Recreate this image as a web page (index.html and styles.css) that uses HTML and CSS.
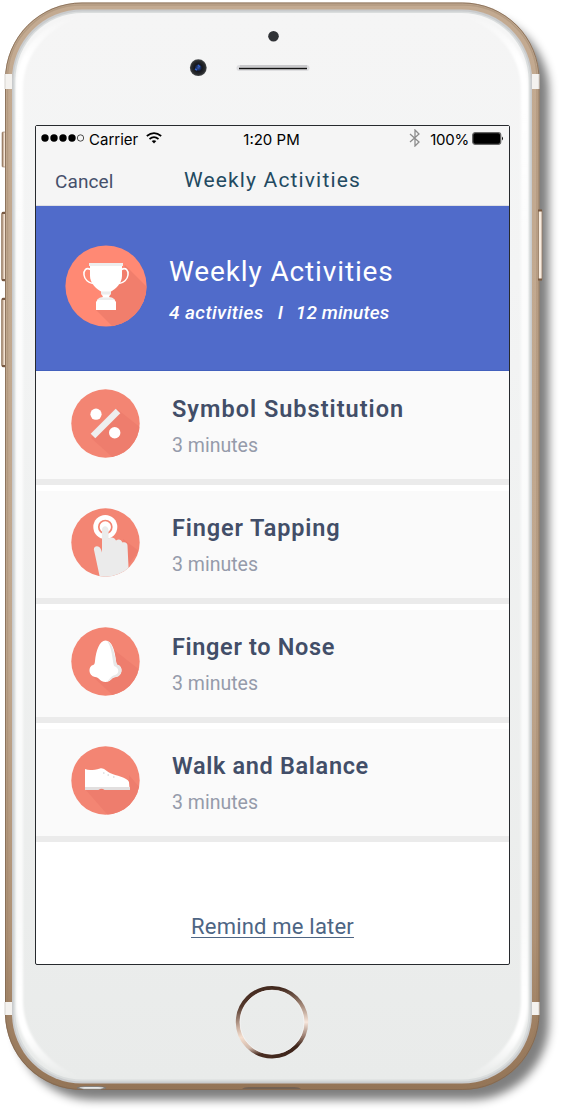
FILE: index.html
```html
<!DOCTYPE html>
<html lang="en">
<head>
<meta charset="utf-8">
<title>Weekly Activities</title>
<link rel="stylesheet" href="styles.css">
</head>
<body>
<main class="device">
  <svg class="hardware" viewBox="0 0 564 1115" aria-hidden="true">
    <defs>
      <linearGradient id="gold" x2="0" y2="1"><stop stop-color="#c3aa91"/><stop offset=".6" stop-color="#c0a78e"/><stop offset=".86" stop-color="#ae9175"/><stop offset="1" stop-color="#947456"/></linearGradient>
      <linearGradient id="face" x2="0" y2="1"><stop stop-color="#f5f5f5"/><stop offset=".25" stop-color="#f3f4f4"/><stop offset="1" stop-color="#e9ebea"/></linearGradient>
      <linearGradient id="shine" gradientUnits="userSpaceOnUse" x1="0" y1="15" x2="0" y2="1078"><stop stop-color="#fff" stop-opacity="0"/><stop offset=".04" stop-color="#fff"/><stop offset=".09" stop-color="#fff"/><stop offset=".2" stop-color="#fff" stop-opacity=".75"/><stop offset=".85" stop-color="#fff" stop-opacity=".75"/><stop offset=".92" stop-color="#fff"/><stop offset=".96" stop-color="#fff"/><stop offset="1" stop-color="#fff" stop-opacity="0"/></linearGradient>
      <linearGradient id="ring" x1=".25" y1="0" x2=".35" y2="1"><stop stop-color="#41281d"/><stop offset=".25" stop-color="#54382c"/><stop offset=".55" stop-color="#cbb0a0"/><stop offset=".7" stop-color="#f5dfcf"/><stop offset=".88" stop-color="#d0b8aa"/><stop offset="1" stop-color="#472b20"/></linearGradient>
      <linearGradient id="ringRight" x2="0" y2="1"><stop stop-color="#41281d"/><stop offset=".25" stop-color="#a38878"/><stop offset=".5" stop-color="#f8e7dc"/><stop offset=".72" stop-color="#927466"/><stop offset=".85" stop-color="#3d241a"/><stop offset="1" stop-color="#41281d"/></linearGradient>
      <radialGradient id="lens"><stop stop-color="#3759ac"/><stop offset=".3" stop-color="#162856"/><stop offset=".45" stop-color="#15171d"/><stop offset=".8" stop-color="#292b2e"/><stop offset="1" stop-color="#484b4d"/></radialGradient>
      <linearGradient id="key"><stop stop-color="#8a6a50"/><stop offset=".4" stop-color="#f5e5d6"/><stop offset="1" stop-color="#c4aa91"/></linearGradient>
      <filter id="shadow" x="-10%" y="-10%" width="120%" height="120%"><feGaussianBlur stdDeviation="5"/></filter>
      <filter id="soft"><feGaussianBlur stdDeviation=".8"/></filter>
    </defs>
    <rect x="15" y="14" width="534" height="1086" rx="78" fill="#000" opacity=".5" filter="url(#shadow)"/>
    <g fill="url(#key)" stroke="#957a62" stroke-width=".6">
      <rect x="2" y="132" width="6" height="35" rx="1"/>
      <rect x="1.5" y="212" width="7" height="69" rx="2"/>
      <rect x="1.5" y="298" width="7" height="69" rx="2"/>
    </g>
    <path d="M2 213h4M2 280h4M2 299h4M2 366h4" stroke="#795a43" stroke-width="2"/>
    <rect x="5" y="2.5" width="534.5" height="1087.5" rx="77" fill="url(#gold)"/>
    <rect x="5.5" y="3" width="533.5" height="1086.5" rx="76.5" fill="none" stroke="#806750" opacity=".8"/>
    <rect x="7.5" y="5" width="529.5" height="1082" rx="74" fill="none" stroke="#927960" stroke-width="1.5" opacity=".3"/>
    <rect x="538.5" y="210" width="3.500" height="70" rx="1" fill="#f8ecdf" stroke="#957a62" stroke-width=".8"/>
    <path d="M538 210.500h4M538 279.500h4" stroke="#795a43" stroke-width="2"/>
    <path d="M5 74h7v15H5zM532 74h7v15h-7zM5 1002h7v13H5zM532 1002h7v13h-7z" fill="#f4f2ef"/>
    <path d="M5 74v15M539 74v15M5 1002v13M539 1002v13" stroke="#d6d3cf"/>
    <rect x="12" y="9.5" width="520" height="1074" rx="70" fill="#c9cbcd"/>
    <rect x="13.5" y="11.5" width="517" height="1070" rx="69" fill="#dadddd"/>
    <rect x="15.5" y="13" width="513" height="1066.5" rx="67" fill="url(#face)"/>
    <path d="M90 14C46 17 16 48 16 87V1003C16 1044 47 1076 82 1078C47 1064 23 1036 23 1000V89C23 54 48 24 90 14ZM454 14C498 17 528 48 528 87V1003C528 1044 497 1076 462 1078C497 1064 521 1036 521 1000V89C521 54 496 24 454 14Z" fill="url(#shine)" filter="url(#soft)"/>
    <path d="M77 1088q3-1.5 8-1.5h13q5 0 8 1.5l-6 1.3H84z" fill="#e8e9e8" stroke="#6d6f70" stroke-width=".7"/>
    <path d="M242 1089q2-2 7-2h45q5 0 7 2z" fill="#726153"/>
    <circle cx="273.5" cy="36.3" r="5.3" fill="#303236"/>
    <circle cx="198.3" cy="67.7" r="8.4" fill="url(#lens)"/>
    <path d="M198 65l2 2M197 70l-2-1" stroke="#3262cb" stroke-width="1.4"/>
    <rect x="236.5" y="65" width="73" height="6" rx="3" fill="#dedee0"/>
    <path d="M240 66h67" stroke="#b5b5b8"/>
    <path d="M239 68.5h68" stroke="#111" stroke-width="1.5"/>
    <path d="M272 988A34.2 34.2 0 0 0 272 1056.400" fill="none" stroke="url(#ring)" stroke-width="4"/>
    <path d="M272 988A34.2 34.2 0 0 1 272 1056.400" fill="none" stroke="url(#ringRight)" stroke-width="4"/>
    <circle cx="272" cy="1022.200" r="32" fill="none" stroke="#f6f6f6" stroke-width=".7"/>
  </svg>
  <section class="screen">
    <div class="status">
      <div class="status-left">
        <svg class="signal" viewBox="0 0 43 8"><g><circle cx="4" cy="4" r="3.7"/><circle cx="13" cy="4" r="3.7"/><circle cx="22" cy="4" r="3.7"/><circle cx="31" cy="4" r="3.7"/><circle cx="39.500" cy="4" r="3.200" fill="none" stroke="#222" stroke-width=".8"/></g></svg>
        <span>Carrier</span>
        <svg class="wifi" viewBox="0 0 16 12"><g fill="none" stroke="#000" stroke-width="1.700"><path d="M.8 4Q8-1.800 15.200 4M3.500 7Q8 3.400 12.500 7"/></g><path d="M5.700 9.100Q8 7.400 10.300 9.100L8 11.500z"/></svg>
      </div>
      <span>1:20 PM</span>
      <div class="status-right">
        <svg class="bluetooth" viewBox="0 0 12 18"><path d="M1 5l9 8-4 4V1l4 4-9 8" fill="none" stroke="#8c8c8c" stroke-width="1.300"/></svg>
        <span class="charge">100%</span>
        <svg class="battery" viewBox="0 0 32 13"><rect x=".7" y=".7" width="28" height="11.600" rx="2.500" fill="#000" stroke="#666" stroke-width="1.300"/><path d="M30 4.500q2 2 0 4z"/></svg>
      </div>
    </div>
    <nav class="nav"><a class="cancel">Cancel</a><h1 class="nav-title">Weekly Activities</h1></nav>
    <header class="hero">
      <svg class="hero-icon" viewBox="0 0 82 82">
        <defs><clipPath id="heroClip"><circle cx="41" cy="41" r="40.600"/></clipPath></defs>
        <circle cx="41" cy="41" r="40.600" fill="#ff8974"/>
        <path d="M60 20L90 50V90H56L31 65l20-24z" fill="#f17e6c" clip-path="url(#heroClip)"/>
        <g fill="none" stroke="#fff" stroke-width="1.500"><path d="M25.500 24.500C21 22 18.500 25.500 19 30c.5 4.500 4.500 8 9 8.500M56.500 24.500C61 22 63.500 25.500 63 30c-.5 4.500-4.500 8-9 8.500"/></g>
        <path d="M25 21h32v10c0 7-6 13-12 16H37c-6-3-12-9-12-16z" fill="#fff"/>
        <path d="M24 18h34v3H24z" fill="#eee"/>
        <path d="M36 46h10v2l-2 4 5 2 2 3v8H31v-8l2-3 5-2-2-4z" fill="#fff"/>
        <path d="M36 46.500h10v3H36zM35 52.500h12l3 2.500H32z" fill="#ececec"/>
      </svg>
      <div class="hero-copy"><h2>Weekly Activities</h2><p><span class="count">4 activities</span><span class="bar">I</span><span class="duration">12 minutes</span></p></div>
    </header>
    <div class="list">
      <article class="item">
        <svg class="icon" viewBox="0 0 69 69"><defs><clipPath id="c"><circle cx="34.500" cy="34.500" r="34.200"/></clipPath></defs><circle cx="34.500" cy="34.500" r="34.200" fill="#f38573"/><path d="M46 20L75 43V75H49L20 49z" fill="#ee7d6d" clip-path="url(#c)"/><path d="M22 47L47 22" stroke="#eee" stroke-width="6.500"/><circle cx="25" cy="25.200" r="5.600" fill="#fff"/><circle cx="43.700" cy="43.800" r="5.700" fill="#fff"/></svg>
        <div class="copy"><h3 class="w-symbol">Symbol Substitution</h3><p>3 minutes</p></div>
      </article>
      <article class="item">
        <svg class="icon" viewBox="0 0 69 69"><circle cx="34.500" cy="34.500" r="34.200" fill="#f38573"/><path d="M52 31L68 43L58 56z" fill="#ee7d6d" clip-path="url(#c)"/><circle cx="34.300" cy="19" r="12" fill="#fff"/><circle cx="34.300" cy="19" r="6.500" fill="#fff" stroke="#f38573" stroke-width="1.700"/><path clip-path="url(#c)" d="M29 70L23 42c-1-4 5-5.500 7-.5l1 3V22c0-5 6-5 6.500 0v8.500c3-2 6-1 7.500 2 3-2 5-1 6.500 2 3-1 5 1 5 3l1.500 32z" fill="#ebebeb"/></svg>
        <div class="copy"><h3 class="w-tapping">Finger Tapping</h3><p>3 minutes</p></div>
      </article>
      <article class="item">
        <svg class="icon" viewBox="0 0 69 69"><circle cx="34.500" cy="34.500" r="34.200" fill="#f38573"/><path d="M42 22L75 48V75H49L20 48z" fill="#ee7d6d" clip-path="url(#c)"/><path d="M34.500 13.500C28.500 13.500 25 24 24 34q-.3 4-2 4c-5 1-5 11 2 12 4 0 5 5 10.500 5s6-5 10.500-5c7-1 7-11 2-12q-1.500 0-2-4c-1-10-4-20.500-10.500-20.500z" fill="#fff"/><path d="M36 14c5 2 7 10 9 20q.5 4 2 4c5 1 5 11-2 12-4 0-5 4-10 5 4-2 4-6 9-7 5-1 4-8-1-9-2-8-2-19-7-25z" fill="#e8e8e8"/></svg>
        <div class="copy"><h3 class="w-nose">Finger to Nose</h3><p>3 minutes</p></div>
      </article>
      <article class="item">
        <svg class="icon" viewBox="0 0 69 69"><circle cx="34.500" cy="34.500" r="34.200" fill="#f38573"/><path d="M14 43h44V29l17 20v26H42z" fill="#ee7d6d" clip-path="url(#c)"/><path d="M14 23c4 2 9 1 15-.500 4-1 6 3 10 4.500 6 3 17 4 19 9l.5 6H14z" fill="#fff"/><path d="M14 41h45v3H33.500q-3-2.500-6 0H14z" fill="#e2dfdf"/><path d="M32 27h1.500M36.500 29h1.500M42 31h1.500" stroke="#ccc"/></svg>
        <div class="copy"><h3 class="w-walk">Walk and Balance</h3><p>3 minutes</p></div>
      </article>
    </div>
    <a class="remind">Remind me later</a>
  </section>
</main>
</body>
</html>
```

FILE: styles.css
```css
* { box-sizing: border-box; }
body { margin: 0; background: #fff; font-family: Roboto, "Liberation Sans", sans-serif; overflow: hidden; }
h1, h2, h3, p { margin: 0; font-weight: 400; white-space: nowrap; }
svg { display: block; flex: none; }
.device { position: relative; width: 564px; height: 1115px; padding: 125px 0 0 35px; }
.hardware { position: absolute; inset: 0; width: 564px; height: 1115px; }
.screen { position: relative; width: 475px; height: 840px; border: 1px solid #272a2e; border-radius: 2px; background: #fff; }
.status { display: grid; grid-template-columns: 1fr auto 1fr; height: 27px; padding: 0 7px 0 5px; align-items: center; background: #f5f5f5; color: #000; font: 15px/27px Inter, sans-serif; letter-spacing: 0; }
.status-left, .status-right { display: flex; align-items: center; }
.status-left { gap: 5px; }
.status-right { justify-content: flex-end; gap: 3px; }
.charge { letter-spacing: -.25px; }
.signal { width: 43px; height: 8px; margin-top: -3px; }
.wifi { width: 16px; height: 12px; margin: -4px 0 0 3px; }
.bluetooth { width: 12px; height: 18px; margin: -3px 6px 0 0; }
.battery { width: 32px; height: 13px; margin: -3px -2px 0 0; }
.nav { display: grid; grid-template-columns: 129px 1fr; height: 53px; padding-left: 19px; background: #f5f5f5; border-bottom: 1px solid #dfe0e4; }
.cancel { padding-top: 17px; color: #46506b; font-size: 19px; line-height: 24px; letter-spacing: .1px; }
.nav-title { padding-top: 14px; color: #234a61; font-size: 21px; line-height: 26px; letter-spacing: 1.150px; }
.hero { display: flex; height: 165px; padding: 39px 0 0 29px; gap: 22px; background: #506bca; color: #fff; border-bottom: 1px solid #4360bd; }
.hero-icon { width: 82px; height: 82px; }
.hero-copy { padding-top: 9px; }
.hero h2 { font-size: 28px; line-height: 35px; letter-spacing: .870px; }
.hero p { display: flex; padding-top: 12px; font-size: 19px; line-height: 24px; font-style: italic; font-weight: 500; }
.count { letter-spacing: .42px; }
.bar { padding: 0 13px 0 14px; }
.duration { letter-spacing: .1px; }
.item { display: flex; height: 119.300px; padding: 17.500px 0 0 35px; gap: 32px; background: #fafafa; border-bottom: 6px solid #ebebeb; }
.item:first-child { height: 113.500px; }
.item + .item { border-top: 6px solid #fff; }
.icon { width: 69px; height: 69px; }
.item:not(:first-child) { padding-top: 17.300px; }
.copy { padding-top: 5px; }
.copy h3 { color: #424e68; font-size: 23.500px; line-height: 30px; font-weight: 600; }
.w-symbol { letter-spacing: 1px; }
.w-tapping { letter-spacing: .870px; }
.w-nose { letter-spacing: .65px; }
.w-walk { letter-spacing: .660px; }
.copy p { padding-top: 8px; color: #959baa; font-size: 19.500px; line-height: 27px; letter-spacing: 0; }
.remind { display: block; width: max-content; margin: 71px auto 0; color: #4d6584; font-size: 22px; line-height: 28px; letter-spacing: .2px; text-decoration: underline; text-decoration-thickness: 1px; text-underline-offset: 3px; }
```
